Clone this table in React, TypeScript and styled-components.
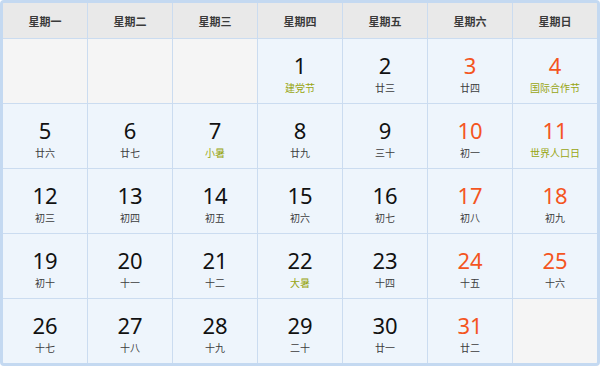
import React from 'react';
import styled, { createGlobalStyle } from 'styled-components';

const GlobalStyle = createGlobalStyle`
  html, body {
    margin: 0;
    padding: 0;
    background: #fff;
  }
`;

const Frame = styled.div`
  width: 600px;
  height: 366px;
  box-sizing: border-box;
  border: 3px solid #c4d9f1;
  border-radius: 4px;
  overflow: hidden;
  font-family: "Noto Sans", "Noto Sans CJK SC", sans-serif;
`;

const Grid = styled.div`
  display: grid;
  grid-template-columns: repeat(7, 1fr);
  grid-template-rows: 35px repeat(5, 1fr);
  gap: 1px;
  height: 100%;
  background: #cbdcf0;
`;

const HeadCell = styled.div`
  display: flex;
  align-items: center;
  justify-content: center;
  background: #e9e9e9;
  color: #3a3a3a;
  font-size: 11px;
  font-weight: bold;
  font-family: "Noto Sans CJK SC", sans-serif;
`;

const DayCell = styled.div<{ $empty?: boolean }>`
  display: flex;
  flex-direction: column;
  align-items: center;
  justify-content: center;
  background: ${(p) => (p.$empty ? '#f5f5f5' : '#eef5fc')};
  padding-top: 2px;
`;

const DayNum = styled.div<{ $weekend?: boolean }>`
  font-size: 22px;
  line-height: 31px;
  height: 31px;
  color: ${(p) => (p.$weekend ? '#f4551f' : '#111')};
`;

const Lunar = styled.div<{ $festival?: boolean }>`
  font-size: 10px;
  line-height: 14px;
  height: 14px;
  color: ${(p) => (p.$festival ? '#98a512' : '#3c3c3c')};
  font-family: "Noto Sans CJK SC", sans-serif;
`;

const weekdays = ['星期一', '星期二', '星期三', '星期四', '星期五', '星期六', '星期日'];

type Day = { n: number; label: string; fest?: boolean } | null;

const days: Day[] = [
  null, null, null,
  { n: 1, label: '建党节', fest: true },
  { n: 2, label: '廿三' },
  { n: 3, label: '廿四' },
  { n: 4, label: '国际合作节', fest: true },
  { n: 5, label: '廿六' },
  { n: 6, label: '廿七' },
  { n: 7, label: '小暑', fest: true },
  { n: 8, label: '廿九' },
  { n: 9, label: '三十' },
  { n: 10, label: '初一' },
  { n: 11, label: '世界人口日', fest: true },
  { n: 12, label: '初三' },
  { n: 13, label: '初四' },
  { n: 14, label: '初五' },
  { n: 15, label: '初六' },
  { n: 16, label: '初七' },
  { n: 17, label: '初八' },
  { n: 18, label: '初九' },
  { n: 19, label: '初十' },
  { n: 20, label: '十一' },
  { n: 21, label: '十二' },
  { n: 22, label: '大暑', fest: true },
  { n: 23, label: '十四' },
  { n: 24, label: '十五' },
  { n: 25, label: '十六' },
  { n: 26, label: '十七' },
  { n: 27, label: '十八' },
  { n: 28, label: '十九' },
  { n: 29, label: '二十' },
  { n: 30, label: '廿一' },
  { n: 31, label: '廿二' },
  null,
];

const App: React.FC = () => {
  return (
    <>
      <GlobalStyle />
      <Frame>
        <Grid>
          {weekdays.map((w) => (
            <HeadCell key={w}>{w}</HeadCell>
          ))}
          {days.map((d, i) => {
            if (!d) return <DayCell key={'e' + i} $empty />;
            const weekend = i % 7 >= 5;
            return (
              <DayCell key={d.n}>
                <DayNum $weekend={weekend}>{d.n}</DayNum>
                <Lunar $festival={d.fest}>{d.label}</Lunar>
              </DayCell>
            );
          })}
        </Grid>
      </Frame>
    </>
  );
};

export default App;
